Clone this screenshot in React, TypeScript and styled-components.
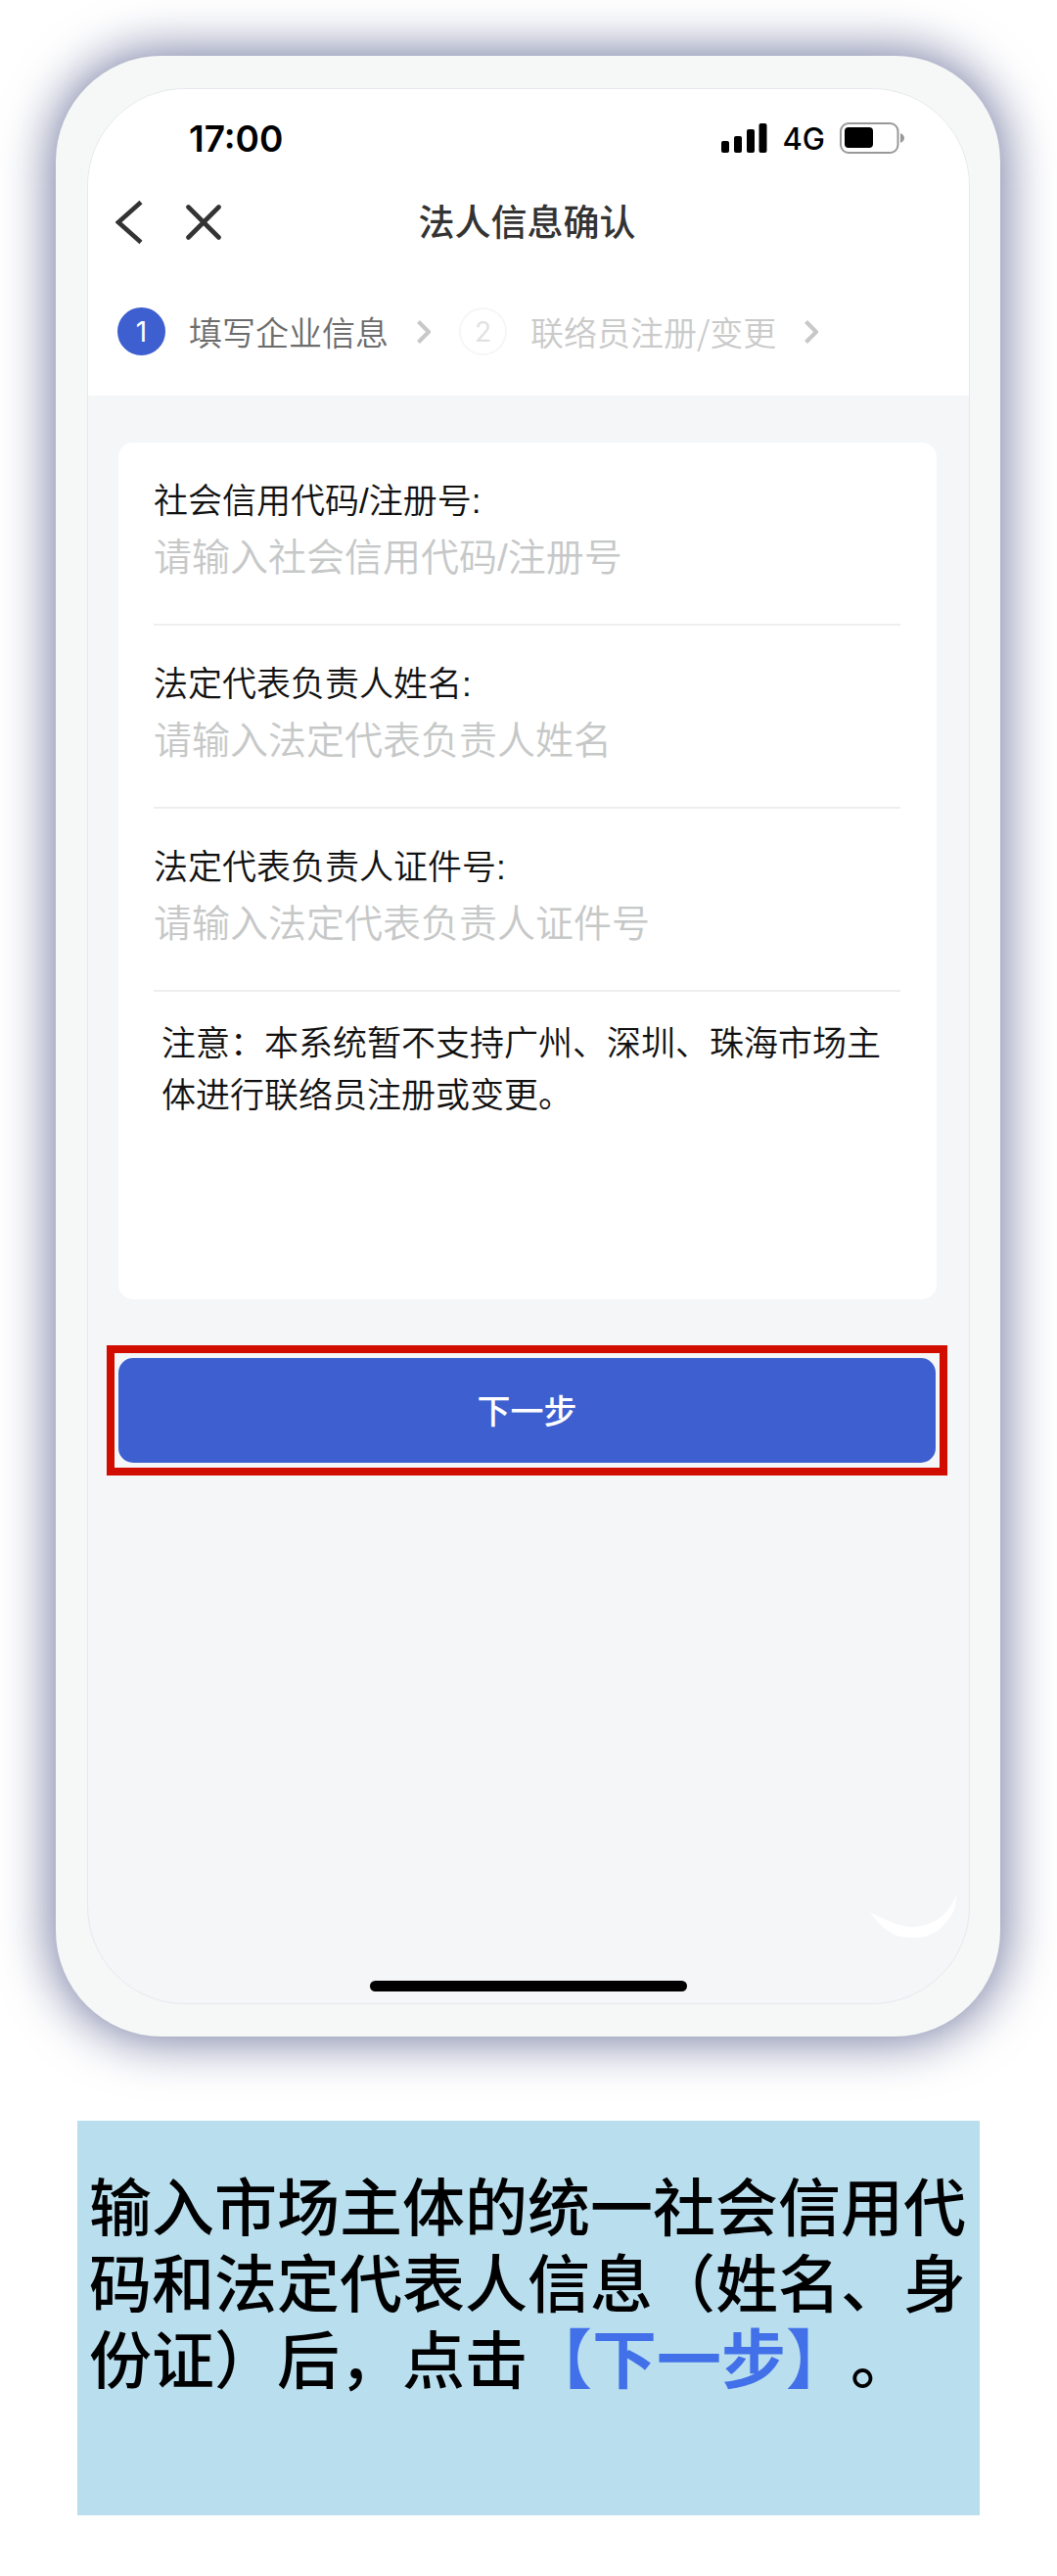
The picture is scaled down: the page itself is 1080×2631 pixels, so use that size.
import React, { useState } from "react";
import styled, { createGlobalStyle } from "styled-components";

const cjk = '"Liberation Sans", "Noto Sans CJK SC", sans-serif';
const latin = 'Inter, "Noto Sans CJK SC", sans-serif';

const GlobalStyle = createGlobalStyle`
  *, *::before, *::after { box-sizing: border-box; }
  body { margin: 0; background: #fff; font-family: ${cjk}; text-spacing-trim: space-all; }
  button, input { font-family: inherit; }
`;

const Page = styled.main`
  display: flex;
  flex-direction: column;
  gap: 86px;
  padding: 57px 58px 62px 57px;
`;

const Phone = styled.section`
  display: flex;
  flex-direction: column;
  aspect-ratio: 965 / 2023;
  padding: 33px 31px 33px 32px;
  border-radius: 108px;
  background: #f6f8f7;
  box-shadow: 0 0 52px 4px #72799f;
`;

const Screen = styled.div`
  position: relative;
  flex: 1;
  display: flex;
  flex-direction: column;
  overflow: hidden;
  border: 1px solid #e6e8ee;
  border-radius: 100px;
  background: #f4f6f8;
`;

const Header = styled.header`
  background: #fff;
`;

const StatusBar = styled.div`
  display: flex;
  align-items: center;
  justify-content: space-between;
  height: 100px;
  padding: 0 66px 0 103px;
  color: #000;
  font-family: ${latin};
`;

const Clock = styled.time`
  font-size: 37px;
  font-weight: 600;
`;

const StatusIcons = styled.div`
  display: flex;
  align-items: center;
  gap: 15px;
`;

const Network = styled.span`
  font-size: 31px;
  font-weight: 500;
`;

const NavBar = styled.div`
  display: grid;
  grid-template-columns: 1fr auto 1fr;
  align-items: center;
  height: 72px;
  padding: 0 31px 0 28px;
`;

const NavActions = styled.div`
  display: flex;
  align-items: center;
  gap: 44px;
`;

const IconButton = styled.button`
  display: flex;
  padding: 0;
  border: 0;
  background: none;
  color: #333;
  cursor: pointer;
`;

const Title = styled.h1`
  margin: 0;
  padding-top: 3px;
  color: #333;
  font-size: 37px;
  font-weight: 500;
  line-height: 48px;
`;

const Steps = styled.ol`
  display: flex;
  align-items: center;
  gap: 29px;
  margin: 0;
  padding: 51px 30px 41px;
  list-style: none;
`;

const Step = styled.li<{ $active?: boolean }>`
  display: flex;
  align-items: center;
  gap: 24px;
  color: ${(p) => (p.$active ? "#6c6c6c" : "#cacaca")};
  font-family: "Noto Sans CJK SC", sans-serif;
  font-size: 34px;
  font-weight: 350;
  line-height: 48px;
  white-space: nowrap;
`;

const StepNumber = styled.span<{ $active?: boolean }>`
  display: flex;
  align-items: center;
  justify-content: center;
  width: 49px;
  height: 49px;
  border: 2px solid ${(p) => (p.$active ? "#3e5fd0" : "#f6f6f6")};
  border-radius: 50%;
  background: ${(p) => (p.$active ? "#3e5fd0" : "#fff")};
  color: ${(p) => (p.$active ? "#fff" : "#e2e2e2")};
  font-family: ${latin};
  font-size: 28px;
  font-weight: 400;
`;

const Form = styled.form`
  display: flex;
  flex-direction: column;
  padding-top: 48px;
`;

const Card = styled.div`
  margin: 0 33px 0 31px;
  padding: 0 37px 182px 36px;
  border-radius: 15px;
  background: #fff;
`;

const Field = styled.div`
  display: flex;
  flex-direction: column;
  gap: 7px;
  padding: 37px 0 39px;
  border-bottom: 2px solid #eeeeee;
`;

const Label = styled.label`
  color: #111;
  font-size: 35px;
  font-weight: 350;
  line-height: 46px;
`;

const TextInput = styled.input`
  width: 100%;
  height: 56px;
  padding: 0;
  border: 0;
  outline: 0;
  background: none;
  color: #111;
  font-size: 39px;
  font-weight: 350;
  &::placeholder {
    color: #c6c8c8;
    opacity: 1;
  }
`;

const Note = styled.p`
  margin: 0;
  padding: 26px 0 0 8px;
  color: #111;
  font-size: 35px;
  font-weight: 350;
  line-height: 53px;
`;

const Highlight = styled.div`
  margin: 47px 22px 0 19px;
  padding: 5px 4px;
  border: 8px solid #d10d00;
`;

const SubmitButton = styled.button`
  display: block;
  width: 100%;
  height: 107px;
  padding: 0 0 2px;
  border: 0;
  border-radius: 15px;
  background: #3e5fd0;
  color: #fff;
  font-size: 34px;
  font-weight: 500;
  cursor: pointer;
`;

const HomeIndicator = styled.div`
  width: 36%;
  height: 11px;
  margin: auto auto 12px;
  border-radius: 6px;
  background: #000;
`;

const Crescent = styled.svg`
  position: absolute;
  right: 12px;
  bottom: 66px;
`;

const Caption = styled.p`
  margin: 0 21px 0 22px;
  padding: 51px 0 118px 12px;
  background: #b9dfef;
  color: #000;
  font-size: 64px;
  font-weight: 500;
  line-height: 78px;
`;

const Accent = styled.strong`
  color: #4270e8;
  font-size: 66px;
  font-weight: 700;
  line-height: 1;
`;

const Chevron = () => (
  <svg width="14" height="24" viewBox="0 0 14 24" fill="none" aria-hidden="true">
    <path d="M1.5 1.5 12 12 1.5 22.5" stroke="#c8c8c8" strokeWidth="4.2" />
  </svg>
);

const fields = [
  { id: "creditCode", label: "社会信用代码/注册号:", hint: "请输入社会信用代码/注册号" },
  { id: "legalName", label: "法定代表负责人姓名:", hint: "请输入法定代表负责人姓名" },
  { id: "legalId", label: "法定代表负责人证件号:", hint: "请输入法定代表负责人证件号" },
];

export default function App() {
  const [values, setValues] = useState<Record<string, string>>({});

  return (
    <>
      <GlobalStyle />
      <Page lang="zh-CN">
        <Phone>
          <Screen>
            <Header>
              <StatusBar>
                <Clock>17:00</Clock>
                <StatusIcons>
                  <svg width="47" height="30" viewBox="0 0 47 30" aria-hidden="true">
                    <rect x="0" y="18" width="8" height="12" rx="2" />
                    <rect x="13" y="13" width="8" height="17" rx="2" />
                    <rect x="26" y="6" width="8" height="24" rx="2" />
                    <rect x="38.500" y="0" width="8" height="30" rx="2" />
                  </svg>
                  <Network>4G</Network>
                  <svg width="66" height="32" viewBox="0 0 66 32" aria-hidden="true">
                    <rect x="1" y="1" width="58.500" height="30" rx="8" fill="none" stroke="#999" strokeWidth="2" />
                    <rect x="5" y="5" width="29" height="21" rx="4" />
                    <path d="M62 11c2.500 1 4 2.800 4 5s-1.500 4-4 5z" fill="#999" />
                  </svg>
                </StatusIcons>
              </StatusBar>
              <NavBar>
                <NavActions>
                  <IconButton type="button" aria-label="返回">
                    <svg width="28" height="46" viewBox="0 0 28 46" fill="none">
                      <path d="M26 2.500 3 23l23 20.500" stroke="currentColor" strokeWidth="4.600" />
                    </svg>
                  </IconButton>
                  <IconButton type="button" aria-label="关闭">
                    <svg width="36" height="36" viewBox="0 0 36 36" fill="none">
                      <path d="m2.500 2.500 31 31m0-31-31 31" stroke="currentColor" strokeWidth="4.600" strokeLinecap="round" />
                    </svg>
                  </IconButton>
                </NavActions>
                <Title>法人信息确认</Title>
              </NavBar>
              <Steps>
                <Step $active>
                  <StepNumber $active>1</StepNumber>
                  填写企业信息
                </Step>
                <Chevron />
                <Step>
                  <StepNumber>2</StepNumber>
                  联络员注册/变更
                </Step>
                <Chevron />
              </Steps>
            </Header>
            <Form onSubmit={(e) => e.preventDefault()}>
              <Card>
                {fields.map((f) => (
                  <Field key={f.id}>
                    <Label htmlFor={f.id}>{f.label}</Label>
                    <TextInput
                      id={f.id}
                      type="text"
                      placeholder={f.hint}
                      value={values[f.id] ?? ""}
                      onChange={(e) => setValues({ ...values, [f.id]: e.target.value })}
                    />
                  </Field>
                ))}
                <Note>注意：本系统暂不支持广州、深圳、珠海市场主体进行联络员注册或变更。</Note>
              </Card>
              <Highlight>
                <SubmitButton type="submit">下一步</SubmitButton>
              </Highlight>
            </Form>
            <HomeIndicator />
            <Crescent width="89" height="44" viewBox="0 0 89 44" aria-hidden="true">
              <path d="M0 17C8 21 14 24 21 27 29 30 37 32 45 32 56 31 64 28 71 23 79 17 84 9 88 0 88 9 86 17 81 23 76 31 69 37 61 40 55 43 49 43 43 43 33 43 25 41 18 36 11 31 5 24 0 17Z" fill="#fff" />
            </Crescent>
          </Screen>
        </Phone>
        <Caption>
          输入市场主体的统一社会信用代码和法定代表人信息（姓名、身份证）后，点击<Accent>【下一步】</Accent>。
        </Caption>
      </Page>
    </>
  );
}
